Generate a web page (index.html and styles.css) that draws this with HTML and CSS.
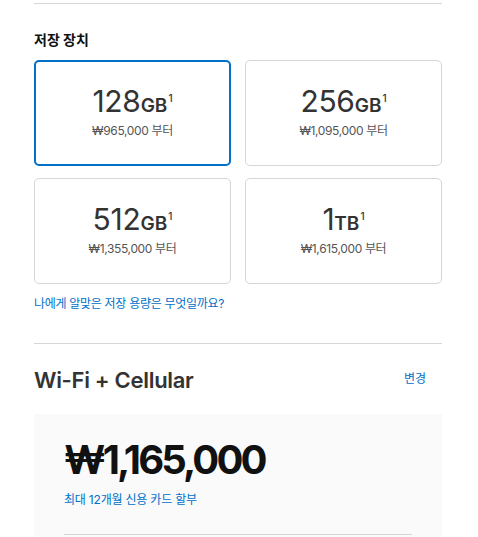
FILE: index.html
```html
<!DOCTYPE html>
<html lang="ko">
<head>
<meta charset="utf-8">
<link rel="stylesheet" href="styles.css">
</head>
<body>
<div class="page">
  <div class="rule top-rule"></div>
  <section class="storage">
    <h2 class="section-title">저장 장치</h2>
    <div class="grid">
      <div class="card selected">
        <div class="cap"><span class="num">128</span><span class="unit">GB</span><sup class="fn">1</sup></div>
        <div class="price">₩965,000 부터</div>
      </div>
      <div class="card">
        <div class="cap"><span class="num">256</span><span class="unit">GB</span><sup class="fn">1</sup></div>
        <div class="price">₩1,095,000 부터</div>
      </div>
      <div class="card">
        <div class="cap"><span class="num">512</span><span class="unit">GB</span><sup class="fn">1</sup></div>
        <div class="price">₩1,355,000 부터</div>
      </div>
      <div class="card">
        <div class="cap"><span class="num">1</span><span class="unit">TB</span><sup class="fn">1</sup></div>
        <div class="price">₩1,615,000 부터</div>
      </div>
    </div>
    <a class="link help" href="#">나에게 알맞은 저장 용량은 무엇일까요?</a>
  </section>
  <div class="rule mid-rule"></div>
  <section class="summary">
    <div class="summary-head">
      <h2 class="model">Wi-Fi + Cellular</h2>
      <a class="link change" href="#">변경</a>
    </div>
    <div class="price-box">
      <div class="total">₩1,165,000</div>
      <a class="link installment" href="#">최대 12개월 신용 카드 할부</a>
      <div class="rule inner-rule"></div>
    </div>
  </section>
</div>
</body>
</html>
```

FILE: styles.css
```css
* { box-sizing: border-box; }
html, body { margin: 0; padding: 0; background: #fff; }
body {
  font-family: "Inter", "Noto Sans CJK KR", sans-serif;
  color: #333;
}
.page {
  width: 408px;
  margin-left: 34px;
}
.rule { height: 1px; background: #d6d6d6; }
.top-rule { margin-top: 3px; }
.section-title {
  margin: 26px 0 0;
  font-size: 14px;
  line-height: 20px;
  font-weight: 700;
  color: #111;
}
.grid {
  display: grid;
  grid-template-columns: 197px 197px;
  column-gap: 14px;
  row-gap: 12px;
  margin-top: 10px;
}
.card {
  height: 106px;
  border: 1px solid #d6d6d6;
  border-radius: 5px;
  display: flex;
  flex-direction: column;
  align-items: center;
  justify-content: center;
  padding-bottom: 4px;
}
.card.selected { border: 2px solid #0070c9; }
.cap {
  display: flex;
  align-items: baseline;
  color: #333;
  line-height: 34px;
}
.num { font-size: 30px; font-weight: 400; letter-spacing: -0.3px; }
.unit { font-size: 19px; font-weight: 600; }
.fn { font-size: 10px; line-height: 10px; position: relative; top: -10px; margin-left: 1px; font-weight: 500; }
.price {
  font-size: 12px;
  line-height: 16px;
  color: #555;
  margin-top: 0;
  letter-spacing: -0.35px;
}
.link { color: #0070c9; text-decoration: none; }
.help {
  display: block;
  margin-top: 12px;
  font-size: 12px;
  line-height: 16px;
  letter-spacing: -0.3px;
}
.mid-rule { margin-top: 31px; }
.summary-head {
  display: flex;
  justify-content: space-between;
  align-items: flex-start;
  margin-top: 21px;
}
.model {
  margin: 0;
  font-size: 22px;
  line-height: 30px;
  font-weight: 600;
  color: #333;
  letter-spacing: -0.3px;
}
.change {
  font-size: 12px;
  line-height: 16px;
  margin-right: 16px;
  margin-top: 6px;
}
.price-box {
  margin-top: 19px;
  background: #fafafa;
  padding: 21px 30px 0;
  height: 140px;
}
.total {
  font-size: 40px;
  line-height: 50px;
  font-weight: 700;
  color: #111;
  letter-spacing: -2.9px;
}
.installment {
  display: block;
  margin-top: 7px;
  font-size: 12px;
  line-height: 16px;
  letter-spacing: -0.2px;
}
.inner-rule { margin-top: 26px; }
```
